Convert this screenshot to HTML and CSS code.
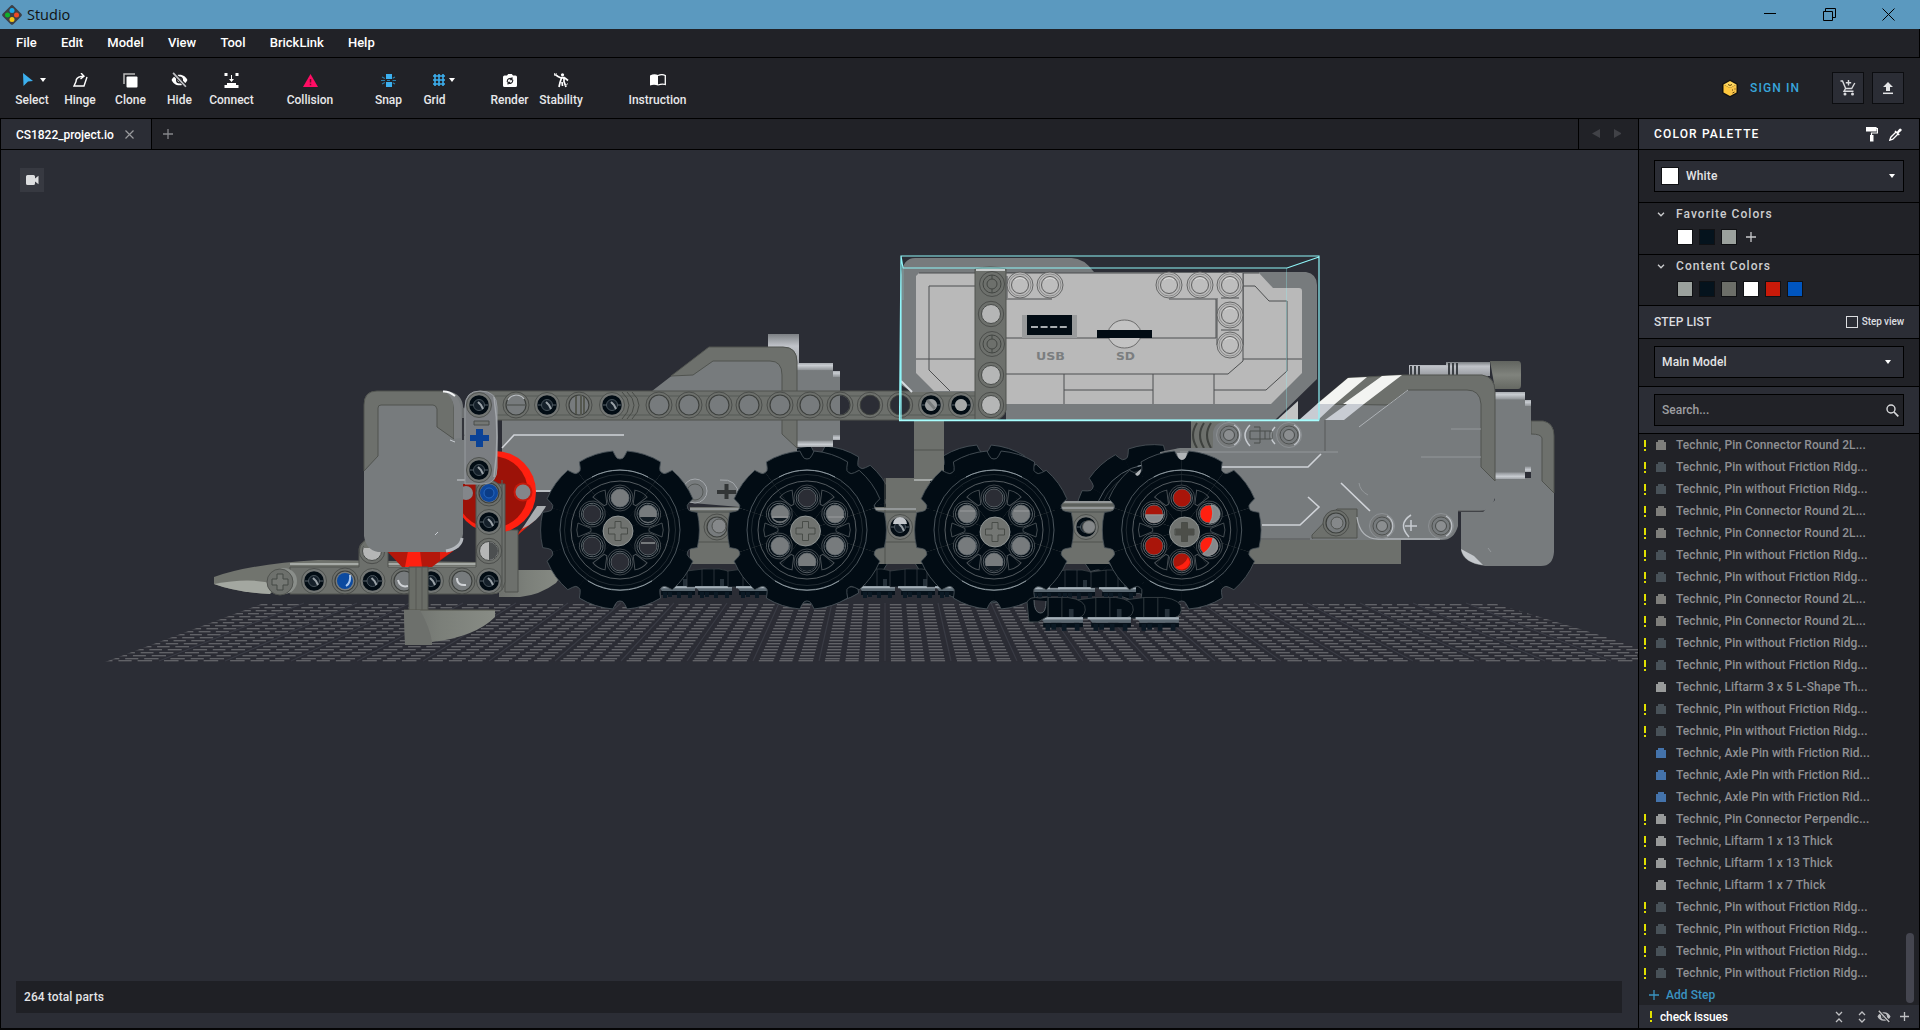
FILE: index.html
```html
<!DOCTYPE html>
<html lang="en">
<head>
<meta charset="utf-8">
<title>Studio</title>
<link rel="stylesheet" href="styles.css">
</head>
<body>
<div class="app">
  <header class="titlebar">
    <svg class="logo" width="20" height="20" viewBox="0 0 20 20"><path d="M10 2.500 17.500 10 10 17.500 2.500 10Z" fill="#3d4047" stroke="#3d4047" stroke-width="4.500" stroke-linejoin="round"/><circle cx="10" cy="5.500" r="2.500" fill="#18a8ea"/><circle cx="5.500" cy="10" r="2.500" fill="#0fb12b"/><circle cx="14.500" cy="10" r="2.500" fill="#f04a24"/><circle cx="10" cy="14.500" r="2.500" fill="#f3c613"/></svg>
    <span class="title">Studio</span>
    <div class="window-buttons">
      <svg width="13" height="13" viewBox="0 0 13 13"><path d="M0 5.500h12"/></svg>
      <svg width="13" height="13" viewBox="0 0 13 13"><path d="M.5 3.500h9v9h-9zM2.500 3.500v-3h10v9h-3"/></svg>
      <svg width="13" height="13" viewBox="0 0 13 13"><path d="M.5.5l12 12M12.500.5l-12 12"/></svg>
    </div>
  </header>

  <nav class="menu"><span>File</span><span>Edit</span><span>Model</span><span>View</span><span>Tool</span><span>BrickLink</span><span>Help</span></nav>

  <div class="toolbar">
    <div class="tools">
      <div class="tool select"><div class="ico"><svg width="12" height="14" viewBox="0 0 12 14"><path d="M1 0l10 8-5 .5L1.500 13Z" fill="#3cb0ef"/></svg><i class="caret"></i></div>Select</div>
      <div class="tool"><div class="ico"><svg width="15" height="15" viewBox="0 0 15 15" fill="none" stroke="#fff" stroke-width="1.400"><path d="M8 3.500C5 4 3 6 3 8.500L1 13h10l3-9M8 0l3 3.200L7.500 6M11 3.500H8"/></svg></div>Hinge</div>
      <div class="tool"><div class="ico"><svg width="15" height="15" viewBox="0 0 15 15"><path d="M1 11V1h11" fill="none" stroke="#bbb" stroke-width="1.500"/><rect x="3.500" y="3.500" width="11" height="11" rx="1" fill="#fff"/></svg></div>Clone</div>
      <div class="tool"><div class="ico"><svg class="eye" width="17" height="16" viewBox="0 0 24 22"><use href="#eyeoff"/></svg></div>Hide</div>
      <div class="tool"><div class="ico"><svg width="15" height="15" viewBox="0 0 15 15"><path d="M.5 0h3v3h-3zM11.500 0h3v3h-3zM7 2h1v4h2L7.500 9 5 6h2zM3 10h9v2h2.500v3H.5v-3H3z" fill="#fff"/></svg></div>Connect</div>
      <div class="tool"><div class="ico"><svg width="15" height="13" viewBox="0 0 15 13"><path d="M7.500 0 15 13H0z" fill="#ff0d64"/><path d="M7.500 5v3.500M7.500 9.800v1.500" stroke="#78072f" stroke-width="1.500"/></svg></div>Collision</div>
      <div class="tool"><div class="ico"><svg width="15" height="13" viewBox="0 0 15 13"><path d="M5 0h6v5H5zM5 8h6v5H5z" fill="#3cb0ef"/><path d="M0 6.500h4M11.500 6.500h3.500M1 3l2.800 1.500M1 10l2.800-1.500M14 3l-2.300 1.300M14 10l-2.300-1.300M6 6.500h3" stroke="#2b80ac" stroke-width="1.100"/></svg></div>Snap</div>
      <div class="tool grid"><div class="ico"><svg width="12" height="12" viewBox="0 0 12 12"><path d="M2 0v12M6 0v12M10 0v12M0 2h12M0 6h12M0 10h12" stroke="#3cb0ef" stroke-width="1.600"/></svg><i class="caret"></i></div>Grid</div>
      <div></div>
      <div class="tool"><div class="ico"><svg width="14" height="13" viewBox="0 0 14 13"><path d="M1.500 1.500H4L5.200 0h3.600L10 1.500h2.500A1.500 1.500 0 0 1 14 3v8.500a1.500 1.500 0 0 1-1.500 1.500h-11A1.500 1.500 0 0 1 0 11.500V3a1.500 1.500 0 0 1 1.500-1.500z" fill="#fff"/><path d="M4.300 8c-.4-3 2.500-4.500 4.700-3M9.700 5.800c.4 3-2.500 4.500-4.700 3M9 3.200v2.500H6.800M5 10.500V8.300h2.200" fill="none" stroke="#212227" stroke-width="1.100"/></svg></div>Render</div>
      <div class="tool"><div class="ico"><svg width="15" height="15" viewBox="0 0 15 15"><circle cx="8.500" cy="1.800" r="1.600" fill="#fff"/><path d="M0 .8 4 3.500 7 5h4l3 2.500M7 4.500h3v4L12 14M7.500 5 6 9.500 5 14M8 9 8.500 13" fill="none" stroke="#fff" stroke-width="1.700"/><path d="M0 2.500 3 .5M11 13l3-2.500" stroke="#ccc"/></svg></div>Stability</div>
      <div></div>
      <div class="tool"><div class="ico"><svg width="16" height="12" viewBox="0 0 16 12"><path d="M0 1.500Q4-.5 8 1v10.500Q4 9.800 0 11.500z" fill="#fff"/><path d="M8 1.500Q12-.2 15.300 1.500v9Q12 9.500 8 11" fill="none" stroke="#fff" stroke-width="1.300"/></svg></div>Instruction</div>
    </div>
    <div class="account">
      <svg width="18" height="19" viewBox="0 0 18 19"><path d="M9 .5 17 5v9L9 18.500 1 14V5z" fill="#111"/><path d="M9 2 15.500 5.500 9 9 2.500 5.500z" fill="#ffd55b"/><path d="M2.500 5.500 9 9v8L2.500 13.500z" fill="#ffc83d"/><path d="M15.500 5.500 9 9v8l6.500-3.500z" fill="#fbc549"/><path d="M7 5.500l2 1 2-1M11 11h1M13.500 10h1M11.500 14l2-1" fill="none" stroke="#5b410c"/></svg>
      <span class="signin">SIGN IN</span>
      <div class="sq"><svg width="16" height="16" viewBox="0 0 16 16" fill="none" stroke="#d9dadd" stroke-width="1.400"><path d="M.5 1h2l3.200 7.500h6L14.800 3M5.500 8.500 4 11.300h9.500M8.500 0v5.500M5.800 2.800h5.400"/><circle cx="5" cy="14" r=".8"/><circle cx="12.500" cy="14" r=".8"/></svg></div>
      <div class="sq up"><svg width="12" height="14" viewBox="0 0 12 14"><path d="M6 1l5 5H8v4H4V6H1z" fill="#e4e5e7"/><path d="M1 12.300h10" stroke="#e4e5e7" stroke-width="1.500"/></svg></div>
    </div>
  </div>

  <div class="work">
    <main class="stage">
      <div class="tabs">
        <div class="tab">CS1822_project.io<svg width="9" height="9" viewBox="0 0 9 9"><path d="M.5.5l8 8M8.500.5l-8 8" stroke="#999a9d" stroke-width="1.200"/></svg></div>
        <div class="newtab"><svg width="10" height="10" viewBox="0 0 10 10"><path d="M5 0v10M0 5h10" stroke="#85868a" stroke-width="1.300"/></svg></div>
        <div class="tabnav"><svg width="29" height="9" viewBox="0 0 29 9"><path d="M8 0v9L0 4.500zM22 0v9l8-4.500z" fill="#414247"/></svg></div>
      </div>
      <div class="viewport">
        <svg class="scene" width="1637" height="878" viewBox="1 150 1637 878">
          <defs>
            <clipPath id="plate"><path d="M267 602H1490L1690 662H105Z"/></clipPath>
            <path id="lug" d="M-17.600-77.300Q0-81.500 17.600-77.300L18.500-72Q19-68 22-67.500L0 0-22-67.500Q-19-68-18.500-72Z"/>
            <path id="lugline" d="M-22-67.500Q-19-68-18.500-72L-17.600-77.300Q0-81.500 17.600-77.300L18.500-72Q19-68 22-67.500"/>
            <g id="ring10"><use href="#lug" transform="rotate(18)"/><use href="#lug" transform="rotate(54)"/><use href="#lug" transform="rotate(90)"/><use href="#lug" transform="rotate(126)"/><use href="#lug" transform="rotate(162)"/><use href="#lug" transform="rotate(198)"/><use href="#lug" transform="rotate(234)"/><use href="#lug" transform="rotate(270)"/><use href="#lug" transform="rotate(306)"/><use href="#lug" transform="rotate(342)"/></g>
            <g id="edge10"><use href="#lugline" transform="rotate(18)"/><use href="#lugline" transform="rotate(54)"/><use href="#lugline" transform="rotate(90)"/><use href="#lugline" transform="rotate(126)"/><use href="#lugline" transform="rotate(162)"/><use href="#lugline" transform="rotate(198)"/><use href="#lugline" transform="rotate(234)"/><use href="#lugline" transform="rotate(270)"/><use href="#lugline" transform="rotate(306)"/><use href="#lugline" transform="rotate(342)"/></g>
            <g id="spoke"><circle cy="-32" r="13" fill="#020c14" stroke="#4b5257" stroke-width=".8"/><circle cy="-32" r="10.800" fill="none" stroke="#697075" stroke-width=".8"/></g>
            <path id="web" d="M-7-42Q0-44.500 7-42L1.500-29H-1.500Z" fill="none" stroke="#4b5257" stroke-width=".9"/>
            <g id="wheel">
              <g fill="#020c14"><use href="#ring10"/></g>
              <g fill="none" stroke="#4a5359" stroke-width=".8"><use href="#edge10"/></g>
              <circle r="60" fill="none" stroke="#525c63" stroke-width=".9"/><circle r="55.500" fill="none" stroke="#2a3238" stroke-width=".8"/><circle r="49" fill="none" stroke="#6a7074" stroke-width=".8"/>
              <path d="M-28-53A60 60 0 0 1 28-53M-32 51A60 60 0 0 0 32 51" fill="none" stroke="#8c989f" stroke-width="1"/>
              <use href="#spoke"/><use href="#spoke" transform="rotate(60)"/><use href="#spoke" transform="rotate(120)"/><use href="#spoke" transform="rotate(180)"/><use href="#spoke" transform="rotate(240)"/><use href="#spoke" transform="rotate(300)"/>
              <use href="#web" transform="rotate(30)"/><use href="#web" transform="rotate(90)"/><use href="#web" transform="rotate(150)"/><use href="#web" transform="rotate(210)"/><use href="#web" transform="rotate(270)"/><use href="#web" transform="rotate(330)"/>
            </g>
            <g id="hub"><circle r="15" fill="#6f726f" stroke="#a0a4a3" stroke-width=".8"/><path d="M-3-9.500h6v6.500h6.500v6H3v6.500h-6V3h-6.500v-6H-3z" fill="#737673" stroke="#444744" stroke-width=".9"/></g>
            <g id="hole"><circle r="13" fill="#6d706c" stroke="#474a47" stroke-width=".9"/><circle r="10" fill="#777b7d" stroke="#3c3f3d" stroke-width="1.200"/></g>
            <g id="holelight"><circle r="12.700" fill="#6d706c" stroke="#474a47" stroke-width=".9"/><circle r="9.500" fill="#b5b6b6" stroke="#484b49" stroke-width="1"/></g>
            <g id="holedark"><circle r="12.700" fill="#6d706c" stroke="#474a47" stroke-width=".9"/><circle r="9.800" fill="#2b2d35" stroke="#3c3f3d" stroke-width="1"/></g>
            <g id="pin"><circle r="12.500" fill="#737674" stroke="#4b4e4b" stroke-width=".9"/><circle r="9.800" fill="#020c14"/><circle r="5.500" fill="#15202a" stroke="#47525a"/><path d="M-9.500 0h4M5.500 0h4" stroke="#59636b"/><path d="M-1-3l3 3 2 4" stroke="#9aa2a8" stroke-width="2" fill="none"/></g>
            <g id="axle"><circle r="12.500" fill="#6d706c" stroke="#474a47" stroke-width=".9"/><circle r="9" fill="#6d706c" stroke="#434643"/><circle r="5" fill="none" stroke="#434643"/><path d="M0-9v4M0 5v4" stroke="#434643"/></g>
            <g id="stud"><circle r="13" fill="#bababa" stroke="#5c5e5e" stroke-width=".9"/><circle r="11" fill="none" stroke="#777" stroke-width=".7"/><circle r="8.500" fill="#bebebe" stroke="#555" stroke-width=".9"/><path d="M-5-5A7 7 0 0 1 5-5" stroke="#e0e0e0" fill="none"/></g>
            <g id="eyering"><circle r="12.500" fill="#777a7b" stroke="#8f9396" stroke-width=".9"/><circle r="9" fill="#777b7d" stroke="#4f5251" stroke-width="1"/><circle r="5.500" fill="#8b8e90" stroke="#484b4a" stroke-width="1"/><path d="M5-10A11.500 11.500 0 0 1 5 10" fill="none" stroke="#bfc3c8" stroke-width="1.300"/></g>
            <g id="tread"><path d="M-10-15Q6-18 22-17Q38-15 37-6Q36 1 28 1H-10Z" fill="#020c14" stroke="#3e464b" stroke-width=".7"/><path d="M5-17V0M17-17V0" stroke="#3a4348" stroke-width=".7"/><path d="M23-7h4V1h-4z" fill="#26313a"/><path d="M1 5h34v4H1z" fill="#06111a"/><path d="M3 6h4v6H3zM8 6h4v5H8zM17 6h4v6h-4zM28 6h4v6h-4z" fill="#0b1924"/><path d="M-2 0H35V5H2Z" fill="#5c6972"/><path d="M-2 1.200H35" stroke="#a5b0b8" stroke-width="2"/></g>
            <linearGradient id="cyl" x2="0" y2="1"><stop offset="0" stop-color="#7c8084"/><stop offset=".3" stop-color="#c0c3c9"/><stop offset="1" stop-color="#96999e"/></linearGradient>
            <linearGradient id="shaft" x2="0" y2="1"><stop offset="0" stop-color="#a9adb2"/><stop offset=".03" stop-color="#c8ccd1"/><stop offset=".08" stop-color="#94989c"/><stop offset=".09" stop-color="#777b7d"/><stop offset=".92" stop-color="#777b7d"/><stop offset=".93" stop-color="#94989c"/><stop offset=".97" stop-color="#c8ccd1"/><stop offset="1" stop-color="#a0a4a8"/></linearGradient>
            <linearGradient id="foot" x2="1"><stop offset="0" stop-color="#6d706c"/><stop offset=".4" stop-color="#7b7f79"/><stop offset="1" stop-color="#888c85"/></linearGradient>
            <linearGradient id="cap" x2="0" y2="1"><stop offset="0" stop-color="#61645f"/><stop offset=".5" stop-color="#80837d"/><stop offset="1" stop-color="#656862"/></linearGradient>
          </defs>

          <!-- floor grid: every row has the same number of cells, so the columns converge -->
          <g clip-path="url(#plate)">
            <g class="floor" transform="translate(0 .5)">
              <g id="rows"><path pathLength="240" d="M251 604H1519"/><path pathLength="240" d="M243 607H1527"/><path pathLength="240" d="M234 610H1536"/><path pathLength="240" d="M226 613H1544"/><path pathLength="240" d="M217 616H1553"/><path pathLength="240" d="M209 619H1561"/><path pathLength="240" d="M200 622H1570"/><path pathLength="240" d="M192 625H1578"/><path pathLength="240" d="M183 628H1587"/><path pathLength="240" d="M175 631H1595"/><path pathLength="240" d="M166 634H1604"/><path pathLength="240" d="M158 637H1612"/><path pathLength="240" d="M149 640H1621"/><path pathLength="240" d="M141 643H1629"/><path pathLength="240" d="M132 646H1638"/><path pathLength="240" d="M124 649H1646"/><path pathLength="240" d="M115 652H1655"/><path pathLength="240" d="M107 655H1663"/><path pathLength="240" d="M99 658H1671"/><path pathLength="240" d="M92 660H1678"/></g>
              <use class="soft" href="#rows" y="1"/>
            </g>
            <path class="seams" d="M304 603L159 661M357 603L225 661M410 603L291 661M463 603L357 661M516 603L423 661M568 603L489 661M621 603L555 661M674 603L621 661M727 603L687 661M779 603L753 661M832 603L819 661M885 603V661M938 603L951 661M991 603L1017 661M1043 603L1083 661M1096 603L1149 661M1149 603L1215 661M1202 603L1281 661M1254 603L1347 661M1307 603L1413 661M1360 603L1479 661M1413 603L1545 661M1466 603L1611 661"/>
          </g>

          <!-- far wheels -->
          <use href="#wheel" x="818" y="525"/><use href="#wheel" x="984" y="524"/><use href="#wheel" transform="translate(1154 524) rotate(12)"/>

          <!-- track links near the floor -->
          <use href="#tread" x="660" y="586"/><use href="#tread" x="697" y="586"/><use href="#tread" x="738" y="586"/><use href="#tread" x="860" y="586"/><use href="#tread" x="900" y="586"/><use href="#tread" x="937" y="586"/><use href="#tread" x="1030" y="587"/><use href="#tread" x="1060" y="587"/><use href="#tread" x="1101" y="587"/>

          <!-- chassis -->
          <path class="dk" d="M690 507H886V478H914V420H944V480H930V510H1060V501H1150V535H1401V564H690Z"/>
          <path class="edge" d="M914 450H944M885 478V564M690 542H750M886 542H920M1060 542H1110"/><path d="M914 480H944" stroke="#b6bab8" stroke-width="1.500"/>
          <path d="M690 509H916M1060 502H1115M1060 508H1115" stroke="#a0a4a6" stroke-width="1.300"/><path d="M690 512H916M1060 505H1115M1060 512H1115" stroke="#4d504e"/>
          <g><use href="#hole" x="717" y="527"/><circle cx="719" cy="526" r="7" fill="#85888a" stroke="#4d504e"/><use href="#pin" x="900" y="527"/><path d="M893 524a7 7 0 0 1 14 0z" fill="#c3c7cb"/><use href="#pin" x="1086" y="527"/><circle cx="1089" cy="527" r="6.500" fill="#85888a" stroke="#4d504e"/></g>

          <!-- middle motor -->
          <path d="M768 334h31v40h-31z" fill="url(#cyl)"/>
          <path d="M797 363h36v84h-36z" fill="url(#shaft)"/><path d="M833 371h7v69h-7z" fill="url(#shaft)"/>
          <path class="gy" d="M502 420V492H560L740 507V503L797 503V362Q797 347 783 347H709L652 391V420Z"/>
          <path class="dk edge" d="M671 376 709 347H783Q797 347 797 362V448L782 434V375Q782 361 770 361H713L693 375Z"/>
          <path class="lt" d="M502 448 514 435H624M535 491H552"/>
          <circle cx="695" cy="491" r="12" fill="none" stroke="#a4a8ac"/><circle cx="695" cy="492" r="8" fill="none" stroke="#555957"/><path d="M717 492h19M726.500 484v15" stroke="#333637" stroke-width="4"/><path d="M720 480q17-2 19 16" fill="none" stroke="#a4a8ac"/>

          <!-- rear foot and red disc -->
          <path d="M518 570H565L556 583Q540 595 520 597H499V590Z" fill="url(#foot)"/>
          <path class="dk edge" d="M505 530H518V592H505z"/>
          <path d="M519 532L540 507 535 520 518 535Z" fill="#e02412"/>
          <path d="M537 506h9q-8 16-24 23z" fill="#a9adb0"/>
          <circle cx="495" cy="492" r="41" fill="#ff2010"/><circle cx="492" cy="492" r="36" fill="#9c1208"/><path d="M527 476A36 36 0 0 1 527 508" stroke="#ff2010" fill="none" stroke-width="3"/>
          <circle cx="523" cy="492" r="9.500" fill="#c41a0c"/><circle cx="523" cy="492" r="7.500" fill="#83868a"/><circle cx="466" cy="493" r="7" fill="#83868a"/>

          <!-- lower arm -->
          <path d="M214 577Q250 564 318 560L478 562V570H300L270 594Q235 592 214 584Z" fill="#71746e"/>
          <path d="M214 584Q250 577 275 584L270 594Q235 592 214 584Z" fill="#a3a7a0"/><path d="M290 564H478M385 567H478" stroke="#b6bab8" stroke-width="1.500"/>
          <path class="dk edge" d="M290 567H359V549Q360 540 372 540L388 548V567H476V484H505V582Q503 594 492 594H290Z"/>
          <path d="M502 480V590" stroke="#555855" stroke-width="1.300"/><path d="M285 574h14v14h-14z" class="dk"/>
          <circle cx="284" cy="581" r="13" fill="#8a8e8a"/><circle cx="280" cy="582" r="13" class="dk edge"/><path d="M277 574h6v5h5v6h-5v5h-6v-5h-5v-6h5z" fill="#757874" stroke="#454845"/>
          <use href="#pin" x="314" y="581"/><use href="#hole" x="345" y="581"/><circle cx="345" cy="581" r="8" fill="#0b4aa0"/><path d="M346 586q5-3 4-11" stroke="#a9c7ee" fill="none" stroke-width="2"/><use href="#pin" x="372.500" y="581"/><use href="#holelight" x="372" y="551"/><use href="#hole" x="404" y="581"/><path d="M398 580q2 8 10 6" stroke="#d0d3d7" stroke-width="2" fill="none"/><use href="#pin" x="431" y="581"/><use href="#hole" x="462" y="581"/><path d="M457 578q0 8 9 7" stroke="#d0d3d7" stroke-width="2" fill="none"/><use href="#pin" x="489" y="581"/>
          <path d="M364 543q8-4 20 1v4h-20z" class="dk"/>
          <use href="#hole" x="489" y="493"/><circle cx="489" cy="493" r="9" fill="#0e479c"/><circle cx="489" cy="493" r="5" fill="#0b3c86" stroke="#2766bd"/>
          <use href="#pin" x="489" y="522"/><use href="#holelight" x="489" y="551"/><path d="M489 542a9 9 0 0 1 0 18z" fill="#4c4f50"/>
          <path d="M387 551H453L432 567H402Z" fill="#b4170b"/><path d="M408 551h12l2 16h-17z" fill="#ff2010"/><path d="M440 551h13l-13 9z" fill="#e51e0f"/>
          <path d="M409 567h19v44h-19z" fill="#6a6d67" stroke="#4f524e"/><path d="M416 567v44M422 567v44" stroke="#565954"/>
          <path d="M404 610H495V617Q475 637 432 642V645H405Z" fill="url(#foot)"/><path d="M404 610H495M405 642H431" stroke="#54574f"/><path d="M404 610H420Q430 628 432 642V645H405Z" class="dk"/>

          <!-- left motor -->
          <path class="gy" d="M364 405Q364 391 377 391H448Q463 394 463 408V434L476 447V484H463V534Q461 551 447 552H378Q366 550 364 536Z"/>
          <path d="M463 408h12v34l-12-8z" fill="#777b7d" stroke="#5a5d5e" stroke-width=".8"/><path d="M463 418v22" stroke="#33353b" stroke-width="2"/>
          <path class="dk edge" d="M364 471V405Q364 391 377 391H442Q454 394 454 408V439L437 427V409Q436 405 433 405H381Q378 405 378 408V456Z"/>
          <path d="M442 391Q461 392 461 412V438L454 439V408Q453 395 442 391Z" fill="#7d8082"/><path d="M443 391.500Q449 391 455 396" fill="none" stroke="#f3f4f5" stroke-width="2"/>
          <path d="M446 551Q461 548 462 538" fill="none" stroke="#b4b8bd" stroke-width="3"/><path d="M435 535l3-3M450 440l5 2M457 480h9" stroke="#c8ccd1"/>

          <!-- main beam -->
          <path class="dk edge" d="M480 391H975V269Q990 265 1006 269V410Q1003 420 992 420H480Z"/>
          <path d="M495 396H975M495 415H985" stroke="#575a57"/>
          <path d="M622 392q14 13 0 27M627 392q14 13 0 27M632 392q14 13 0 27" fill="none" stroke="#484b47"/>

          <!-- selected control unit -->
          <path class="gy" d="M901 385V275Q903 258 915 258H1070Q1083 257 1094 272H1306Q1317 274 1317 285V379L1275 420H1006V300H975V392H912Z"/>
          <path d="M1277 420 1298 401V420Z" fill="#c3c4c4"/>
          <path d="M919 273H1259L1273 288H1299Q1302 288 1302 291V373L1271 404H1006V300H975V391H934L916 373V276Z" fill="#b9b9b9"/>
          <path d="M901 381 912 392" stroke="#d6dade" stroke-width="2"/>
          <path class="panel" d="M975 286H929V370L950 391M916 359H975M1006 338H1216V299H1169M1006 299H1052M1006 374H1228L1243 361V273M1243 359H1302M1064 374V404M1153 374V404M1214 374V404M1064 390H1153M1214 390H1266L1287 371V301H1269L1255 286H1243M919 273H1259"/>
          <path class="dk edge" d="M975 269Q990 265 1006 269V410Q1003 420 992 420H975Z"/><path d="M976 270h29" stroke="#c9cccc" stroke-width="2"/>
          <path d="M1007 273H1052V298H1007zM1168 273H1243V345H1217V298H1168z" fill="#bababa"/><path class="panel" d="M1007 273H1052M1007 276V298M1243 273V345M1217 298V345M1221 298h18M1221 330h18"/>
          <use href="#stud" x="1020" y="285"/><use href="#stud" x="1050" y="285"/><use href="#stud" x="1169" y="285"/><use href="#stud" x="1200" y="285"/><use href="#stud" x="1230" y="285"/><use href="#stud" x="1230" y="315"/><use href="#stud" x="1230" y="345"/>
          <path d="M1022 315h55v23h-55z" fill="#999b9c"/><path d="M1027 315h45v20h-45z" fill="#020c14"/><path d="M1031 327h36" stroke="#e0e2e3" stroke-width="1.500" stroke-dasharray="7 2.600"/>
          <ellipse cx="1124.500" cy="334" rx="16.500" ry="14" fill="#c3c3c3" stroke="#555" stroke-width=".8"/><path d="M1097 330h55v8h-55z" fill="#020c14"/>
          <text class="port" x="1036" y="360" textLength="29" lengthAdjust="spacingAndGlyphs">USB</text><text class="port" x="1116" y="360" textLength="19" lengthAdjust="spacingAndGlyphs">SD</text>

          <!-- beam holes -->
          <use href="#axle" x="992" y="284"/><use href="#holelight" x="991" y="314"/><use href="#axle" x="992" y="344"/><use href="#holelight" x="991" y="375"/><use href="#holelight" x="991" y="405"/>
          <use href="#hole" x="516" y="405"/><path d="M507 405h18" stroke="#474a47"/><path d="M508 400a9.500 9.500 0 0 1 16-1" fill="none" stroke="#b8bcc0" stroke-width="1.300"/><use href="#pin" x="547" y="405"/><use href="#hole" x="579" y="405"/><path d="M576 396v18M581 395v20M584 397v16" stroke="#54574f" stroke-width="2"/><use href="#pin" x="612" y="405"/>
          <use href="#hole" x="659" y="405"/><use href="#hole" x="689" y="405"/><use href="#hole" x="719" y="405"/><use href="#hole" x="749" y="405"/><use href="#hole" x="780" y="405"/><use href="#hole" x="810" y="405"/><use href="#hole" x="840" y="405"/><path d="M840 395.500a9.500 9.500 0 0 1 0 19z" fill="#2b2d35"/><use href="#holedark" x="870" y="405"/><use href="#holedark" x="900" y="405"/>
          <use href="#pin" x="931" y="405"/><circle cx="931" cy="405" r="6" fill="#9b9ea0"/><path d="M927 400l8 9" stroke="#777b7d" stroke-width="3"/><use href="#pin" x="961" y="405"/><circle cx="961" cy="405" r="6" fill="#a6a8a8"/>

          <!-- left connector -->
          <path d="M465 407Q465 391 480 391Q497 391 497 407V468Q497 484 483 484H465Z" fill="#7b7e82" stroke="#989ca0"/><path d="M494 397Q500 436 494 477" fill="none" stroke="#a3a7ab" stroke-width="1.500"/>
          <use href="#pin" x="479" y="405"/><use href="#pin" x="479" y="470"/><path d="M474 421h15v4h-15z" stroke="#4c4f4d" fill="#737673"/><path d="M476 429h7v6h6v6h-6v6h-7v-6h-6v-6h6z" fill="#0b4296"/>

          <!-- right assembly -->
          <path class="dk" d="M1191 421H1225V450H1191z"/><path d="M1197 423q-8 12 0 25M1204 423q-8 12 0 25M1211 423q-8 12 0 25" fill="none" stroke="#3e413e" stroke-width="2"/>
          <path class="gy" d="M1213 432Q1215 421 1229 421H1299L1348 378 1402 375H1482Q1495 377 1495 392V498Q1491 511 1480 511H1458V526Q1454 540 1442 540H1160V452L1180 448H1213Z"/>
          <path d="M1409 365h37v10h-37zM1446 362h44v14h-44z" fill="url(#cyl)"/><path d="M1411 366v9M1415 366v9M1419 366v9M1449 363v12M1453 363v12M1457 363v12" stroke="#272c31" stroke-width="1.700"/>
          <path d="M1490 361h28q3 0 3 4v20q0 4-3 4h-23z" fill="url(#cap)"/>
          <path class="gy" d="M1531 421H1543Q1554 423 1554 436V552Q1553 566 1541 566H1485Q1463 563 1461 550V512H1483L1495 500V478H1531Z"/>
          <path class="dk edge" d="M1531 421H1543Q1554 423 1554 436V493L1542 481V438Q1541 434 1531 434Z"/><path d="M1461 549Q1464 563 1483 565L1474 556Z" fill="#c4c8cc"/>
          <path d="M1495 392h30v87h-30z" fill="url(#shaft)"/><path d="M1525 400h6v72h-6z" fill="url(#shaft)"/>
          <path class="dk edge" d="M1317 404 1348 378 1402 375H1482Q1495 377 1495 392V481L1481 467V404Q1480 390 1467 390H1408L1388 405Z"/>
          <path d="M1348 378 1367 377 1335 404H1317ZM1382 376 1402 375 1364 404H1343Z" fill="#f3f4f2"/><path d="M1317 404H1335L1318 420H1299ZM1347 404H1364L1344 420H1325Z" fill="#c8ccd3"/>
          <path d="M1325 420V451M1312 539 1337 509M1484 511H1458M1310 539H1160" stroke="#585b5b" fill="none"/>
          <path class="lt" d="M1222 467H1308L1321 454M1262 525H1300L1319 507 1308 497M1341 483 1370 511"/>
          <path d="M1359 427 1408 390" stroke="#aeb2b6"/><path d="M1451 429H1481M1421 457H1481M1180 452H1338M1359 483q1 8 9 12M1488 548l3 4" fill="none" stroke="#94989b"/>
          <use href="#eyering" x="1229" y="435"/><path d="M1250 425q-10 10 0 21M1275 427q-8 9 0 17" fill="none" stroke="#c6cacf" stroke-width="1.500"/><path d="M1250 431h22v8h-22zM1254 427h6v16h-6M1265 431v8M1270 431v8" fill="none" stroke="#4b4e4c"/><use href="#eyering" x="1289" y="435"/>
          <path class="dk edge" d="M1312 535 1337 509H1357V538H1312Z"/><use href="#hole" x="1336" y="523"/><circle cx="1337" cy="523" r="6" fill="#85888a" stroke="#505350"/>
          <path d="M1357 517Q1360 540 1380 539H1440" fill="none" stroke="#b0b4b8" stroke-width="1.300"/><use href="#eyering" x="1382" y="526"/><path d="M1411 515q-14 9-2 22M1405 526h12M1411 520v11" fill="none" stroke="#c8ccd1" stroke-width="1.500"/><use href="#eyering" x="1441" y="526"/>

          <!-- near wheels -->
          <use href="#wheel" x="620" y="530"/><use href="#wheel" x="807" y="530"/><use href="#wheel" x="994" y="530"/><use href="#wheel" x="1181.700" y="530"/>
          <path d="M1177 453h10q-1 7-5 7t-5-7M1135 474l6-5q0 6-4 7z" fill="#b0b4b7"/>
          <g stroke="#687075" stroke-width=".8">
            <g fill="#777b7d"><circle cx="620" cy="498" r="9"/><circle cx="648" cy="514" r="9"/><circle cx="780" cy="514" r="9"/><circle cx="835" cy="514" r="9"/><circle cx="780" cy="546" r="9"/><circle cx="835" cy="546" r="9"/><circle cx="807" cy="562" r="9"/><circle cx="967" cy="514" r="9"/><circle cx="1021" cy="514" r="9"/><circle cx="967" cy="546" r="9"/><circle cx="1021" cy="546" r="9"/><circle cx="994" cy="562" r="9"/></g>
            <g fill="#2b2d35"><circle cx="592" cy="514" r="9"/><circle cx="592" cy="546" r="9"/><circle cx="648" cy="546" r="9"/><circle cx="620" cy="562" r="9"/><circle cx="807" cy="498" r="9"/><circle cx="994" cy="498" r="9"/></g>
            <g fill="#a9150a"><circle cx="1182" cy="498" r="9"/><circle cx="1154" cy="514" r="9"/><circle cx="1154" cy="546" r="9"/><circle cx="1182" cy="562" r="9"/></g>
            <g fill="#ff2010"><circle cx="1209" cy="514" r="9"/><circle cx="1209" cy="546" r="9"/></g>
          </g>
          <path d="M772 517h16M828 517h16M1146 515h17a9 9 0 0 1-17 2zM1211 505a9 9 0 0 1-1 18q5-8 1-18M1213 538a9 9 0 0 1-10 16q9-6 10-16M641 543h14M960 511h15M1014 511h15" fill="#85888b" stroke="#8e9193" stroke-width="1.300"/>
          <path d="M773 518a9 9 0 0 0 14 0zM640 517a9 9 0 0 0 16 0zM799 566a9 9 0 0 0 16 0zM986 566a9 9 0 0 0 16 0z" fill="#111b23"/>
          <path d="M1175 567a9 9 0 0 0 15-5l-2-5q-3 8-13 10z" fill="#ff2010"/>
          <use href="#hub" x="618" y="531"/><use href="#hub" x="805.500" y="531"/><use href="#hub" x="995" y="532"/><use href="#hub" x="1184.500" y="532"/><path d="M1181.500 523h6v6h6.500v6h-6.500v6.500h-6v-6.500h-6v-6h6z" fill="#4c4e49"/>
          <g transform="translate(1042 617) scale(1.170 1.150)"><use href="#tread" x="82"/><use href="#tread" x="41"/><use href="#tread"/></g>
          <path d="M1027 602Q1030 596 1040 598L1048 597V616L1038 622H1029Z" fill="#020c14" stroke="#3e464b"/><path d="M1034 600q0 12 6 13t6-12" fill="#2b2d35" stroke="#596167"/>

          <!-- selection bounds -->
          <path d="M901 256H1319V420H901ZM899.500 420 901 256 903 268H1287L1319 257" fill="none" stroke="#8ff5f8" stroke-width="1.200"/><path d="M1286.500 268V420M903 268V300" stroke="#8ff5f8" stroke-opacity=".3"/>
          <path d="M899 420.500H1319" stroke="#a9ffff" stroke-width="1.500"/>
        </svg>
        <div class="camera"><svg width="13" height="10" viewBox="0 0 13 10"><path d="M1.500 0h6A1.500 1.500 0 0 1 9 1.500V3.500L12.500.8v8.400L9 6.500v2A1.500 1.500 0 0 1 7.500 10h-6A1.500 1.500 0 0 1 0 8.500v-7A1.500 1.500 0 0 1 1.500 0z" fill="#dddee0"/></svg></div>
        <div class="status">264 total parts</div>
      </div>
    </main>

    <aside class="side">
      <div class="head palette"><span>COLOR PALETTE</span>
        <div class="headicons"><svg width="12" height="15" viewBox="0 0 12 15"><path d="M0 0h10v4H0zM10 1.500h1.500V6H5.500v2" fill="none" stroke="#fff" stroke-width="1.200"/><path d="M0 0h10v4H0zM4 8h3.500v6.500H4z" fill="#fff"/></svg><svg width="13" height="13" viewBox="0 0 13 13"><path d="M7 4 1.800 9.200.8 12.200l3-1L9 6" fill="none" stroke="#fff" stroke-width="1.300"/><path d="M5.500 3.500l1-1L8 3.800 10.200 1q1-1 2 0t0 2L9.500 5.200 10.800 6.500l-1 1z" fill="#fff"/></svg></div>
      </div>
      <div class="pick"><div class="box"><i class="sw white big"></i><span>White</span><i class="caret"></i></div></div>
      <div class="colors"><div class="ctitle"><svg width="8" height="5" viewBox="0 0 8 5"><path d="M1 .8l3 3 3-3"/></svg>Favorite Colors</div>
        <div class="swatches"><i class="sw white"></i><i class="sw black"></i><i class="sw lgray"></i><svg width="10" height="10" viewBox="0 0 10 10"><path d="M5 0v10M0 5h10" stroke="#c8c9cb" stroke-width="1.300"/></svg></div></div>
      <div class="colors content"><div class="ctitle"><svg width="8" height="5" viewBox="0 0 8 5"><path d="M1 .8l3 3 3-3"/></svg>Content Colors</div>
        <div class="swatches"><i class="sw lgray"></i><i class="sw black"></i><i class="sw dgray"></i><i class="sw white"></i><i class="sw red"></i><i class="sw blue"></i></div></div>
      <div class="head steps"><span>STEP LIST</span><div class="stepview"><i></i>Step view</div></div>
      <div class="pick model"><div class="box"><span>Main Model</span><i class="caret"></i></div></div>
      <div class="search"><div class="box"><span>Search...</span><svg width="13" height="13" viewBox="0 0 13 13"><circle cx="5" cy="5" r="4" fill="none" stroke="#d8d9db" stroke-width="1.400"/><path d="M8 8l4.300 4.300" stroke="#d8d9db" stroke-width="1.700"/></svg></div></div>
      <div class="list">
        <div class="row warn mid">Technic, Pin Connector Round 2L...</div>
        <div class="row warn dim">Technic, Pin without Friction Ridg...</div>
        <div class="row warn dim">Technic, Pin without Friction Ridg...</div>
        <div class="row warn mid">Technic, Pin Connector Round 2L...</div>
        <div class="row warn mid">Technic, Pin Connector Round 2L...</div>
        <div class="row warn dim">Technic, Pin without Friction Ridg...</div>
        <div class="row warn dim">Technic, Pin without Friction Ridg...</div>
        <div class="row warn mid">Technic, Pin Connector Round 2L...</div>
        <div class="row warn mid">Technic, Pin Connector Round 2L...</div>
        <div class="row warn dim">Technic, Pin without Friction Ridg...</div>
        <div class="row warn dim">Technic, Pin without Friction Ridg...</div>
        <div class="row lite">Technic, Liftarm 3 x 5 L-Shape Th...</div>
        <div class="row warn dim">Technic, Pin without Friction Ridg...</div>
        <div class="row warn dim">Technic, Pin without Friction Ridg...</div>
        <div class="row azure">Technic, Axle Pin with Friction Rid...</div>
        <div class="row azure">Technic, Axle Pin with Friction Rid...</div>
        <div class="row azure">Technic, Axle Pin with Friction Rid...</div>
        <div class="row warn lite">Technic, Pin Connector Perpendic...</div>
        <div class="row warn lite">Technic, Liftarm 1 x 13 Thick</div>
        <div class="row warn lite">Technic, Liftarm 1 x 13 Thick</div>
        <div class="row lite">Technic, Liftarm 1 x 7 Thick</div>
        <div class="row warn dim">Technic, Pin without Friction Ridg...</div>
        <div class="row warn dim">Technic, Pin without Friction Ridg...</div>
        <div class="row warn dim">Technic, Pin without Friction Ridg...</div>
        <div class="row warn dim">Technic, Pin without Friction Ridg...</div>
        <div class="add"><svg width="10" height="10" viewBox="0 0 10 10"><path d="M5 0v10M0 5h10" stroke="#3a93c0" stroke-width="1.300"/></svg>Add Step</div>
        <i class="thumb"></i>
      </div>
      <div class="issues"><i class="bang"></i><span>check issues</span>
        <div class="issueicons">
          <svg width="8" height="12" viewBox="0 0 8 12"><path d="M1 1l3 3 3-3M1 11l3-3 3 3"/></svg>
          <svg width="8" height="12" viewBox="0 0 8 12"><path d="M1 4l3-3 3 3M1 8l3 3 3-3"/></svg>
          <svg class="eye grey" width="14" height="13" viewBox="0 0 24 22"><g id="eyeoff"><path d="M12 3.500C6.500 3.500 2.500 7 .8 11c1.700 4 5.700 7.500 11.200 7.500S21.500 15 23.200 11C21.500 7 17.500 3.500 12 3.500zM12 6a5 5 0 1 1 0 10 5 5 0 0 1 0-10z"/><circle cx="12" cy="11" r="3"/><path d="M2 0l20 21" class="cut"/><path d="M3 1l18 19.500" class="slash"/></g></svg>
          <svg width="9" height="9" viewBox="0 0 9 9"><path d="M4.500 0v9M0 4.500h9"/></svg>
        </div>
      </div>
    </aside>
  </div>
</div>
</body>
</html>
```
FILE: styles.css
```css
* { box-sizing: border-box; }
body { margin: 0; background: #000; font: 500 12px/16px Roboto, "Liberation Sans", sans-serif; color: #e3e4e6; letter-spacing: .1px; }
svg { display: block; flex: none; }
.app { width: 1920px; height: 1030px; display: flex; flex-direction: column; background: #212227; overflow: hidden; }

.titlebar { height: 29px; flex: none; background: #5b99bf; display: flex; align-items: center; padding: 0 25px 0 2px; }
.title { font: 14.500px/20px "Open Sans", "Noto Sans", sans-serif; color: #111; margin-left: 5px; letter-spacing: 0; }
.window-buttons { margin-left: auto; display: flex; gap: 46px; fill: none; stroke: #000; stroke-width: 1; }

.menu { height: 29px; flex: none; display: flex; align-items: center; gap: 24.200px; padding: 0 16px; font-size: 13px; letter-spacing: 0; color: #fff; border-bottom: 1px solid #000; border-right: 1px solid #000; }
.toolbar { height: 61px; flex: none; display: flex; justify-content: space-between; border-bottom: 1px solid #000; padding: 0 16px 0 8px; }
.tools { display: grid; grid-template-columns: 48px 48px 53px 45px 59px 98px 59px 33px 33px 51px 52px 33px 75px; padding-top: 13px; font-size: 12px; letter-spacing: 0; color: #e8e8ea; }
.tool { display: flex; flex-direction: column; align-items: center; white-space: nowrap; line-height: 16px; gap: 3px; }
.tool .ico { height: 18px; display: flex; align-items: center; gap: 7px; }
.select .ico { padding-left: 4px; }
.grid .ico { padding-left: 15px; gap: 5px; margin-right: -4px; }
.caret { width: 0; height: 0; border: 3.500px solid transparent; border-top: 4px solid #fff; border-bottom: 0; flex: none; }
.tool .caret { margin-left: -1px; }
.eye { fill: #fff; }
.eye .cut { stroke: #212227; stroke-width: 5; }
.eye .slash { stroke: #fff; stroke-width: 2.500; }
.grey, .grey .slash { fill: #bfc0c3; stroke: #bfc0c3; stroke-width: 0; }
.grey .slash { stroke-width: 2.500; }
.account { display: flex; align-items: center; }
.signin { color: #38a6dc; font-size: 12px; letter-spacing: 1.100px; margin: 0 32px 0 11px; }
.sq { width: 32px; height: 32px; border: 1px solid #0c0d10; background: #2b2d35; display: grid; place-items: center; margin-right: 8px; }
.up { margin-right: 0; }

.work { flex: 1; display: flex; min-height: 0; border-bottom: 2px solid #050506; }
.stage { width: 1639px; flex: none; border-left: 1px solid #000; border-right: 1px solid #000; display: flex; flex-direction: column; }
.tabs { height: 31px; flex: none; display: flex; border-bottom: 1px solid #000; }
.tab { width: 151px; background: #2b2d35; border-right: 1px solid #000; padding: 1px 0 0 15px; display: flex; align-items: center; gap: 11px; color: #fff; letter-spacing: -.03px; }
.newtab { padding: 10px 11px; }
.tabnav { margin-left: auto; width: 60px; border-left: 1px solid #000; padding: 10px 13px; }
.viewport { flex: 1; background: #2b2d35; display: grid; position: relative; }
.scene { grid-area: 1 / 1; }
.camera { position: absolute; left: 19px; top: 18px; width: 24px; height: 24px; background: #373941; display: grid; place-items: center; }
.status { position: absolute; left: 15px; right: 16px; bottom: 15px; height: 32px; background: #1f2025; padding: 8px; }

.dk { fill: #6d706c; }
.gy { fill: #777b7d; }
.edge { stroke: #50534f; stroke-width: 1; }
path.edge:not(.dk) { fill: none; }
.lt { fill: none; stroke: #d0d3d8; stroke-width: 1.600; }
.panel { fill: none; stroke: #4d4f50; stroke-width: 1; }
.floor { fill: none; stroke: #626368; stroke-width: 1; stroke-dasharray: 0 .9 2.200 .9 2 .9 2.200 .9; }
.soft { opacity: .35; }
.seams { fill: none; stroke: #393b44; stroke-width: 1.200; }
.port { font: bold 10.500px "DejaVu Sans", sans-serif; fill: #7b7e80; letter-spacing: 0; }

.side { width: 281px; flex: none; border-right: 1px solid #000; display: flex; flex-direction: column; }
.head { background: #2b2d35; border-bottom: 1px solid #000; display: flex; align-items: center; justify-content: space-between; padding: 0 15px; flex: none; }
.palette { height: 31px; letter-spacing: 1.150px; color: #fff; }
.headicons { display: flex; align-items: center; gap: 11px; padding-right: 2px; }
.pick { height: 53px; flex: none; padding: 10px 15px; border-bottom: 1px solid #000; }
.box { height: 32px; border: 1px solid #000; background: #2b2d35; display: flex; align-items: center; padding: 0 8px 0 7px; letter-spacing: .15px; }
.box .caret { margin-left: auto; }
.sw { width: 16px; height: 16px; border: 1px solid #101114; flex: none; }
.big { width: 18px; height: 18px; margin: 0 7px 0 -1px; }
.white { background: #fff; } .black { background: #05131d; } .lgray { background: #9ba19d; } .dgray { background: #6c6e68; } .red { background: #c91a09; } .blue { background: #0055bf; }
.colors { height: 52px; flex: none; border-bottom: 1px solid #000; padding-top: 3px; }
.content { height: 51px; }
.ctitle { display: flex; align-items: center; gap: 11px; padding-left: 18px; letter-spacing: 1.050px; color: #cdced0; }
.ctitle svg { fill: none; stroke: #cdced0; stroke-width: 1.300; }
.swatches { display: flex; align-items: center; gap: 6px; padding: 7px 0 0 38px; }
.swatches svg { margin-left: 3px; }
.steps { height: 33px; color: #dcdde0; letter-spacing: .1px; }
.stepview { display: flex; align-items: center; font-size: 10px; letter-spacing: -.1px; gap: 4px; }
.stepview i { width: 12px; height: 12px; border: 1px solid #dcdde0; }
.model { height: 48px; padding-top: 7px; }
.model .box { padding-right: 12px; }
.search { height: 47px; flex: none; padding: 7px 15px; background: #2b2d35; border-bottom: 1px solid #000; }
.search .box { background: #212227; justify-content: space-between; padding-right: 4px; color: #9d9ea1; letter-spacing: 0; }
.list { flex: 1; position: relative; min-height: 0; }
.row { height: 22px; line-height: 22px; padding-left: 37px; color: #8f9093; letter-spacing: .07px; white-space: nowrap; position: relative; }
.row::before { content: ""; position: absolute; left: 17px; top: 6px; width: 10px; height: 10px; background: currentColor; clip-path: polygon(20% 0, 80% 0, 80% 20%, 100% 20%, 100% 100%, 0 100%, 0 20%, 20% 20%); }
.mid::before { background: #7e7e7b; } .dim::before { background: #485158; } .lite::before { background: #989a9a; } .azure::before { background: #4473ab; }
.warn::after { content: ""; position: absolute; left: 5px; top: 6px; width: 2px; height: 11px; background: linear-gradient(#e0e000 7px, transparent 7px 9px, #e0e000 9px); }
.add { height: 22px; display: flex; align-items: center; gap: 7px; padding-left: 10px; color: #3a93c0; letter-spacing: .05px; }
.thumb { position: absolute; right: 5px; top: 499px; width: 8px; height: 70px; border-radius: 4px; background: #454650; }
.issues { height: 23px; flex: none; background: #2b2d35; display: flex; align-items: center; padding: 0 10px 0 11px; color: #fff; letter-spacing: -.15px; }
.bang { width: 2px; height: 11px; margin-right: 8px; background: linear-gradient(#e0e000 7px, transparent 7px 9px, #e0e000 9px); }
.issueicons { margin-left: auto; display: flex; align-items: center; gap: 15px; fill: none; stroke: #bfc0c3; stroke-width: 1.300; }
.issueicons .eye { margin: 0 -6px 0 -4px; }
```
